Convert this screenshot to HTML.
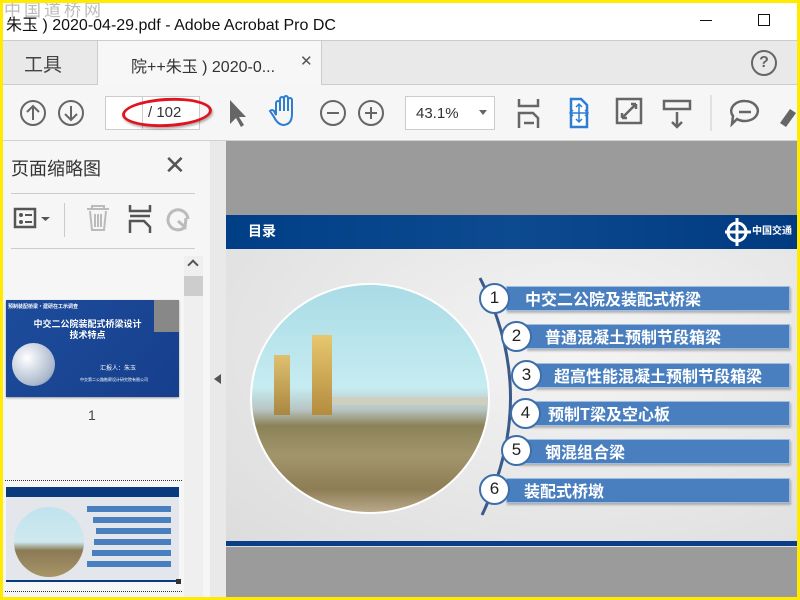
<!DOCTYPE html>
<html><head><meta charset="utf-8">
<style>
*{margin:0;padding:0;box-sizing:border-box}
body{width:800px;height:600px;overflow:hidden;position:relative;background:#fff;font-family:"Liberation Sans","Noto Sans CJK SC",sans-serif;}
.a{position:absolute}
.cjk{font-family:"Noto Sans CJK SC","WenQuanYi Zen Hei",sans-serif}
.bar{position:absolute;background:#4a7fbf;border:1px solid #9fbde0;height:25px;color:#fff;font-weight:bold;font-size:16px;line-height:22px;font-family:"Noto Sans CJK SC",sans-serif;box-shadow:1px 2px 2px rgba(0,0,0,.25)}
.num{position:absolute;width:31px;height:31px;border-radius:50%;background:#fff;border:2.5px solid #3c6eaa;font-size:17px;text-align:center;line-height:26px;color:#222}
</style></head><body>
<div class="a" style="left:0;top:0;width:800px;height:600px;border:3px solid #ffea00;z-index:50;pointer-events:none"></div>

<div class="a cjk" style="left:4px;top:0;font-size:17px;color:#bbb;letter-spacing:3px;line-height:18px">中国道桥网</div>
<div class="a" style="left:6px;top:11px;font-size:16px;color:#111;font-family:'Liberation Sans','Noto Sans CJK SC',sans-serif">朱玉 ) 2020-04-29.pdf - Adobe Acrobat Pro DC</div>
<div class="a" style="left:700px;top:20px;width:12px;height:1px;background:#111"></div>
<div class="a" style="left:758px;top:14px;width:12px;height:12px;border:1px solid #111"></div>

<div class="a" style="left:0;top:40px;width:800px;height:45px;background:#e9e9e9;border-top:1px solid #ccc;border-bottom:1px solid #ccc"></div>
<div class="a cjk" style="left:24px;top:50px;font-size:19px;color:#444">工具</div>
<div class="a" style="left:97px;top:41px;width:225px;height:44px;background:#f7f7f7;border-left:1px solid #ccc;border-right:1px solid #ccc"></div>
<div class="a" style="left:131px;top:53px;font-size:16px;color:#333;font-family:'Liberation Sans','Noto Sans CJK SC',sans-serif">院++朱玉 ) 2020-0...</div>
<div class="a" style="left:300px;top:52px;font-size:15px;color:#555">✕</div>
<div class="a" style="left:751px;top:50px;width:26px;height:26px;border:2px solid #666;border-radius:50%;text-align:center;font-weight:bold;font-size:16px;line-height:22px;color:#666">?</div>

<div class="a" style="left:0;top:85px;width:800px;height:56px;background:#f6f6f6;border-bottom:1px solid #d0d0d0"></div>
<svg class="a" style="left:0;top:85px" width="800" height="56">
<g fill="none" stroke="#666" stroke-width="2">
<circle cx="33" cy="28" r="12"/><path d="M33 35V21M27 27l6-6 6 6"/>
<circle cx="71" cy="28" r="12"/><path d="M71 21v14M65 29l6 6 6-6"/>
<circle cx="333" cy="28" r="12"/><path d="M327 28h12"/>
<circle cx="371" cy="28" r="12"/><path d="M365 28h12M371 22v12"/>
</g>
<path d="M230 15v24l6-6 5 9 3-2-5-8h7z" fill="#666"/>
<path d="M276 30v-12a2 2 0 0 1 4 0v8v-12a2 2 0 0 1 4 0v12v-13a2 2 0 0 1 4 0v13v-11a2 2 0 0 1 4 0v14q0 10-8 11q-6 0-10-8l-4-6q2-2 4 0z" fill="none" stroke="#2d7dd2" stroke-width="2"/>
<g fill="none" stroke="#666" stroke-width="2.5">
<path d="M519 14v7h19v-7M519 43V28h14l5 5v10M524 38h10"/>
<path d="M617 14h24v24h-24z"/><path d="M622 33l14-14M622 33v-5M622 33h5M636 19h-5M636 19v5"/>
<path d="M664 16h26v8h-26zM677 27v15M672 37l5 5 5-5"/>
<path d="M745 16a13 10 0 1 1-8 18l-5 5 1-8a13 10 0 0 1 12-15zM739 27h12"/>
</g>
<path d="M571 14h10l6 6v22h-16z" fill="#fff" stroke="#2d7dd2" stroke-width="2.5"/>
<path d="M579 20v16M571 28h16" stroke="#2d7dd2" stroke-width="1.5"/>
<path d="M576 22l3-3 3 3M576 34l3 3 3-3M573 25l-3 3 3 3M585 25l3 3-3 3" fill="none" stroke="#2d7dd2" stroke-width="1.5"/>
<path d="M711 10v36" stroke="#ccc"/>
<path d="M780 38l10-14 6 4-10 14z" fill="#666"/>
</svg>
<div class="a" style="left:105px;top:96px;width:95px;height:34px;background:#fff;border:1px solid #ccc"></div>
<div class="a" style="left:142px;top:96px;width:1px;height:34px;background:#ccc"></div>
<div class="a" style="left:148px;top:104px;font-size:15px;color:#333">/ 102</div>
<div class="a" style="left:122px;top:98px;width:90px;height:29px;border:3px solid #e0141e;border-radius:50%;transform:rotate(-3deg);box-shadow:1px 2px 2px rgba(0,0,0,.3)"></div>
<div class="a" style="left:405px;top:96px;width:90px;height:34px;background:#fff;border:1px solid #ccc;font-size:15px;color:#333;padding:8px 0 0 10px">43.1%</div>
<div class="a" style="left:479px;top:110px;border:4px solid transparent;border-top:5px solid #666"></div>

<div class="a" style="left:0;top:141px;width:210px;height:459px;background:#f6f6f6"></div>
<div class="a cjk" style="left:11px;top:155px;font-size:18px;color:#333">页面缩略图</div>
<div class="a" style="left:164px;top:150px;font-size:26px;color:#555;line-height:30px">✕</div>
<div class="a" style="left:11px;top:193px;width:184px;height:1px;background:#ccc"></div>
<div class="a" style="left:11px;top:248px;width:184px;height:1px;background:#ccc"></div>
<div class="a" style="left:64px;top:203px;width:1px;height:34px;background:#ccc"></div>
<svg class="a" style="left:0;top:195px" width="210" height="52">
<rect x="15" y="14" width="20" height="18" fill="none" stroke="#555" stroke-width="2.5"/>
<circle cx="21" cy="20" r="2" fill="#555"/><circle cx="21" cy="27" r="2" fill="#555"/>
<path d="M25 20h7M25 27h7" stroke="#555" stroke-width="2"/><path d="M41 22h9l-4.5 4z" fill="#555"/>
<path d="M87 14h22M92 14v-3h12v3M90 16l2 19h12l2-19M95 19v13M98 19v13M101 19v13" fill="none" stroke="#bbb" stroke-width="2"/>
<path d="M130 10v6h20v-6M130 38v-12h14l6 6v6M130 21h20" fill="none" stroke="#555" stroke-width="2.5"/>
<path d="M188 24a10 10 0 1 0-3 8M178 26l7 6 1-9" fill="none" stroke="#bbb" stroke-width="3"/>
</svg>
<div class="a" style="left:184px;top:256px;width:19px;height:344px;background:#efefef"></div>
<div class="a" style="left:184px;top:276px;width:19px;height:20px;background:#cdcdcd"></div>
<div class="a" style="left:189px;top:261px;width:8px;height:8px;border-left:2px solid #555;border-top:2px solid #555;transform:rotate(45deg)"></div>
<div class="a" style="left:6px;top:300px;width:173px;height:97px;background:linear-gradient(135deg,#1d4c9c,#163f8c);box-shadow:0 1px 2px #999"></div>
<div class="a" style="left:154px;top:300px;width:25px;height:32px;background:#888"></div>
<div class="a cjk" style="left:8px;top:303px;font-size:5px;color:#fff;font-weight:bold">预制装配桥梁·建研在工示调查</div>
<div class="a cjk" style="left:30px;top:318px;font-size:9px;color:#fff;font-weight:bold;line-height:11px;text-align:center;width:115px">中交二公院装配式桥梁设计<br>技术特点</div>
<div class="a" style="left:12px;top:343px;width:43px;height:43px;border-radius:50%;background:radial-gradient(circle at 35% 35%,#fff,#aab7cc 70%,#5a6f8f)"></div>
<div class="a cjk" style="left:100px;top:363px;font-size:6px;color:#fff">汇报人：朱玉</div>
<div class="a cjk" style="left:80px;top:378px;font-size:4px;color:#fff;line-height:5px">中交第二公路勘察设计研究院有限公司</div>
<div class="a" style="left:88px;top:407px;font-size:14px;color:#444">1</div>
<div class="a" style="left:5px;top:480px;width:177px;border-top:1px dotted #333"></div>
<div class="a" style="left:5px;top:591px;width:177px;border-top:1px dotted #333"></div>
<div class="a" style="left:6px;top:487px;width:173px;height:95px;background:#e3e6ea"></div>
<div class="a" style="left:6px;top:487px;width:173px;height:10px;background:#0a3a7e"></div>
<div class="a" style="left:6px;top:580px;width:173px;height:2px;background:#0a3a7e"></div>
<div class="a" style="left:14px;top:507px;width:70px;height:70px;border-radius:50%;background:linear-gradient(#bfe3ee 0%,#cfe8ee 50%,#8a7a55 62%,#a89468 100%)"></div>
<div class="a" style="left:87px;top:506px;width:84px;height:6px;background:#4a7fbf"></div>
<div class="a" style="left:93px;top:517px;width:78px;height:6px;background:#4a7fbf"></div>
<div class="a" style="left:96px;top:528px;width:75px;height:6px;background:#4a7fbf"></div>
<div class="a" style="left:94px;top:539px;width:77px;height:6px;background:#4a7fbf"></div>
<div class="a" style="left:92px;top:550px;width:79px;height:6px;background:#4a7fbf"></div>
<div class="a" style="left:87px;top:561px;width:84px;height:6px;background:#4a7fbf"></div>
<div class="a" style="left:176px;top:579px;width:5px;height:5px;background:#333"></div>

<div class="a" style="left:210px;top:141px;width:16px;height:459px;background:#e9e9e9"></div>
<div class="a" style="left:214px;top:374px;border:5px solid transparent;border-right:7px solid #555;border-left:0"></div>

<div class="a" style="left:226px;top:141px;width:574px;height:459px;background:#9b9b9b"></div>
<div class="a" style="left:226px;top:215px;width:574px;height:332px;background:radial-gradient(ellipse at 60% 40%,#f4f4f4,#dcdcdc)"></div>
<div class="a" style="left:226px;top:215px;width:574px;height:34px;background:linear-gradient(90deg,#003f86,#0d4a90 50%,#003a80)"></div>
<div class="a cjk" style="left:248px;top:221px;font-size:14px;color:#fff;font-weight:bold">目录</div>
<svg class="a" style="left:725px;top:216px" width="75" height="32">
<circle cx="12" cy="16" r="9" fill="none" stroke="#fff" stroke-width="3"/><path d="M12 2v28M-2 16h28" stroke="#fff" stroke-width="3"/>
<text x="27" y="18" fill="#fff" font-size="10" font-weight="bold" font-family="Noto Sans CJK SC,sans-serif">中国交通</text>
</svg>
<div class="a" style="left:226px;top:541px;width:574px;height:5px;background:#0a3f88"></div>
<div class="a" style="left:250px;top:283px;width:240px;height:231px;border-radius:50%;border:2px solid #fff;overflow:hidden;background:linear-gradient(180deg,#a9dbe6 0%,#c6ecf1 45%,#b7c4c2 55%,#8b8258 62%,#a2956c 75%,#8e7d55 90%,#b8a98a 100%)">
<div class="a" style="left:60px;top:50px;width:20px;height:80px;background:linear-gradient(#e7c770,#b48c3e)"></div>
<div class="a" style="left:22px;top:70px;width:16px;height:60px;background:linear-gradient(#e0c070,#a88840)"></div>
<div class="a" style="left:80px;top:112px;width:160px;height:8px;background:#cfcfbf"></div>
</div>
<svg class="a" style="left:470px;top:275px" width="70" height="245"><path d="M10 3Q70 120 12 240" fill="none" stroke="#3a5a8a" stroke-width="3"/></svg>
<div class="bar" style="left:506px;top:286px;width:284px;padding-left:18px">中交二公院及装配式桥梁</div>
<div class="bar" style="left:526px;top:324px;width:264px;padding-left:18px">普通混凝土预制节段箱梁</div>
<div class="bar" style="left:535px;top:363px;width:255px;padding-left:18px">超高性能混凝土预制节段箱梁</div>
<div class="bar" style="left:527px;top:401px;width:263px;padding-left:20px">预制T梁及空心板</div>
<div class="bar" style="left:519px;top:439px;width:271px;padding-left:25px">钢混组合梁</div>
<div class="bar" style="left:506px;top:478px;width:284px;padding-left:17px">装配式桥墩</div>
<div class="num" style="left:479px;top:283px">1</div>
<div class="num" style="left:501px;top:321px">2</div>
<div class="num" style="left:511px;top:360px">3</div>
<div class="num" style="left:510px;top:398px">4</div>
<div class="num" style="left:501px;top:435px">5</div>
<div class="num" style="left:479px;top:474px">6</div>
</body></html>
